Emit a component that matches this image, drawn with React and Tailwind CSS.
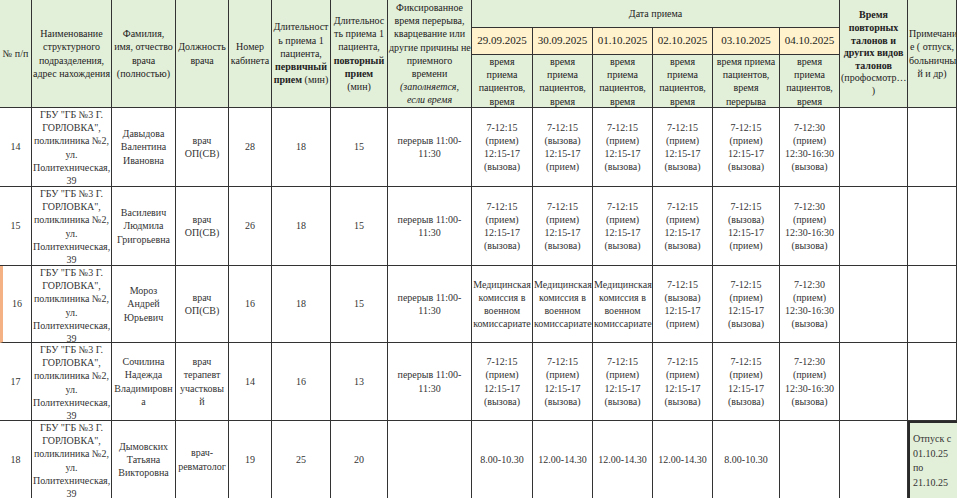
import React from "react";

// Schedule sheet for doctors of polyclinic №2 (spreadsheet look)
const ADDR = ['ГБУ "ГБ №3 Г.', 'ГОРЛОВКА",', "поликлиника №2,", "ул.", "Политехническая,", "39"];
const BREAK = ["перерыв 11:00-", "11:30"];
const PV = ["7-12:15", "(прием)", "12:15-17", "(вызова)"];
const VP = ["7-12:15", "(вызова)", "12:15-17", "(прием)"];
const LAST = ["7-12:30", "(прием)", "12:30-16:30", "(вызова)"];
const MED = ["Медицинская", "комиссия в", "военном", "комиссариате"];

const DATES = ["29.09.2025", "30.09.2025", "01.10.2025", "02.10.2025", "03.10.2025", "04.10.2025"];

const ROWS = [
  {
    n: "14",
    name: ["Давыдова", "Валентина", "Ивановна"],
    pos: ["врач", "ОП(СВ)"],
    room: "28", first: "18", rep: "15", brk: BREAK,
    days: [PV, VP, PV, PV, PV, LAST],
  },
  {
    n: "15",
    name: ["Василевич", "Людмила", "Григорьевна"],
    pos: ["врач", "ОП(СВ)"],
    room: "26", first: "18", rep: "15", brk: BREAK,
    days: [PV, PV, PV, PV, VP, LAST],
  },
  {
    n: "16",
    name: ["Мороз", "Андрей", "Юрьевич"],
    pos: ["врач", "ОП(СВ)"],
    room: "16", first: "18", rep: "15", brk: BREAK,
    days: [MED, MED, MED, VP, PV, LAST],
    mark: true,
  },
  {
    n: "17",
    name: ["Сочилина", "Надежда", "Владимировн", "а"],
    pos: ["врач", "терапевт", "участковы", "й"],
    room: "14", first: "16", rep: "13", brk: BREAK,
    days: [PV, PV, PV, PV, PV, LAST],
  },
  {
    n: "18",
    name: ["Дымовских", "Татьяна", "Викторовна"],
    pos: ["врач-", "ревматолог"],
    room: "19", first: "25", rep: "20", brk: [],
    days: [["8.00-10.30"], ["12.00-14.30"], ["12.00-14.30"], ["12.00-14.30"], ["8.00-10.30"], []],
    note: ["Отпуск с", "01.10.25", "по", "21.10.25"],
  },
];

const Cell = ({ lines = [], className = "", inner = "" }) => (
  <div className={`flex flex-col overflow-hidden border-r border-b border-[#333] px-px ${className}`}>
    <div className={`my-auto text-center ${inner}`}>
      {lines.map((l, i) => (
        <div key={i} className="whitespace-nowrap">
          {l}
        </div>
      ))}
    </div>
  </div>
);

const App = () => {
  return (
    <div className="w-[960px] h-[498px] overflow-hidden bg-white font-['Liberation_Serif',serif] text-[10px] leading-[13.2px] text-[#333]">
      <div className="grid grid-cols-[32px_80px_64px_53px_43px_59px_57px_84px_61px_60px_60px_60px_67px_60px_68px_49px] grid-rows-[28px_27px_53px_79px_79px_77px_78px_78px]">
        {/* header */}
        <Cell className="row-span-3 bg-[#e2efd9] text-[#222]" lines={["№ п/п"]} />
        <Cell
          className="row-span-3 bg-[#e2efd9] text-[#222]"
          lines={["Наименование", "структурного", "подразделения,", "адрес нахождения"]}
        />
        <Cell
          className="row-span-3 bg-[#e2efd9] text-[#222]"
          lines={["Фамилия,", "имя, отчество", "врача", "(полностью)"]}
        />
        <Cell className="row-span-3 bg-[#e2efd9] text-[#222]" lines={["Должность", "врача"]} />
        <Cell className="row-span-3 bg-[#e2efd9] text-[#222]" lines={["Номер", "кабинета"]} />
        <Cell
          className="row-span-3 bg-[#e2efd9] text-[#222]"
          lines={[
            "Длительност",
            "ь приема 1",
            "пациента,",
            <b key="b">первичный</b>,
            <span key="c">
              <b>прием</b> (мин)
            </span>,
          ]}
        />
        <Cell
          className="row-span-3 bg-[#e2efd9] text-[#222]"
          lines={["Длительнос", "ть приема 1", "пациента,", <b key="b">повторный</b>, <b key="c">прием</b>, "(мин)"]}
        />
        <Cell
          className="row-span-3 bg-[#e2efd9] text-[#222] pt-[1px]"
          lines={[
            "Фиксированное",
            "время перерыва,",
            "кварцевание или",
            "другие причины не",
            "приемного",
            "времени",
            <i key="a">(заполняется,</i>,
            <i key="b">если время</i>,
            <i key="c">неприемное не</i>,
          ]}
        />
        <Cell className="col-span-6 bg-[#e2efd9] text-[#222]" lines={["Дата  приема"]} />
        <Cell
          className="row-span-3 bg-[#e2efd9] text-[#222]"
          inner="leading-[12.6px]"
          lines={[
            <b key="a">Время</b>,
            <b key="b">повторных</b>,
            <b key="c">талонов и</b>,
            <b key="d">других видов</b>,
            <b key="e">талонов</b>,
            "(профосмотр…",
            ")",
          ]}
        />
        <Cell
          className="row-span-3 bg-[#e2efd9] text-[#222]"
          lines={["Примечани", "е ( отпуск,", "больничны", "й и др)"]}
        />
        {DATES.map((d) => (
          <Cell key={d} className="bg-[#fff2cc] text-[#222]" inner="text-[11px]" lines={[d]} />
        ))}
        {DATES.map((d, i) => (
          <Cell
            key={"s" + d}
            className="bg-[#e2efd9] text-[#222]"
            lines={
              i === 4
                ? ["время приема", "пациентов,", "время", "перерыва"]
                : ["время", "приема", "пациентов,", "время", "перерыва"]
            }
          />
        ))}

        {/* body */}
        {ROWS.map((r) => (
          <React.Fragment key={r.n}>
            <Cell className={r.mark ? "border-l-[3px] border-l-[#f4b183]" : ""} lines={[r.n]} />
            <Cell lines={ADDR} />
            <Cell lines={r.name} />
            <Cell lines={r.pos} />
            <Cell lines={[r.room]} />
            <Cell lines={[r.first]} />
            <Cell lines={[r.rep]} />
            <Cell lines={r.brk} />
            {r.days.map((d, i) => (
              <Cell key={i} lines={d} />
            ))}
            <Cell />
            {r.note ? (
              <div className="flex flex-col border-l-2 border-t-2 border-[#2a2a2a] bg-[#e2efd9] pl-[3px]">
                <div className="my-auto leading-[14.5px]">
                  {r.note.map((l) => (
                    <div key={l}>{l}</div>
                  ))}
                </div>
              </div>
            ) : (
              <Cell />
            )}
          </React.Fragment>
        ))}
      </div>
    </div>
  );
};

export default App;
